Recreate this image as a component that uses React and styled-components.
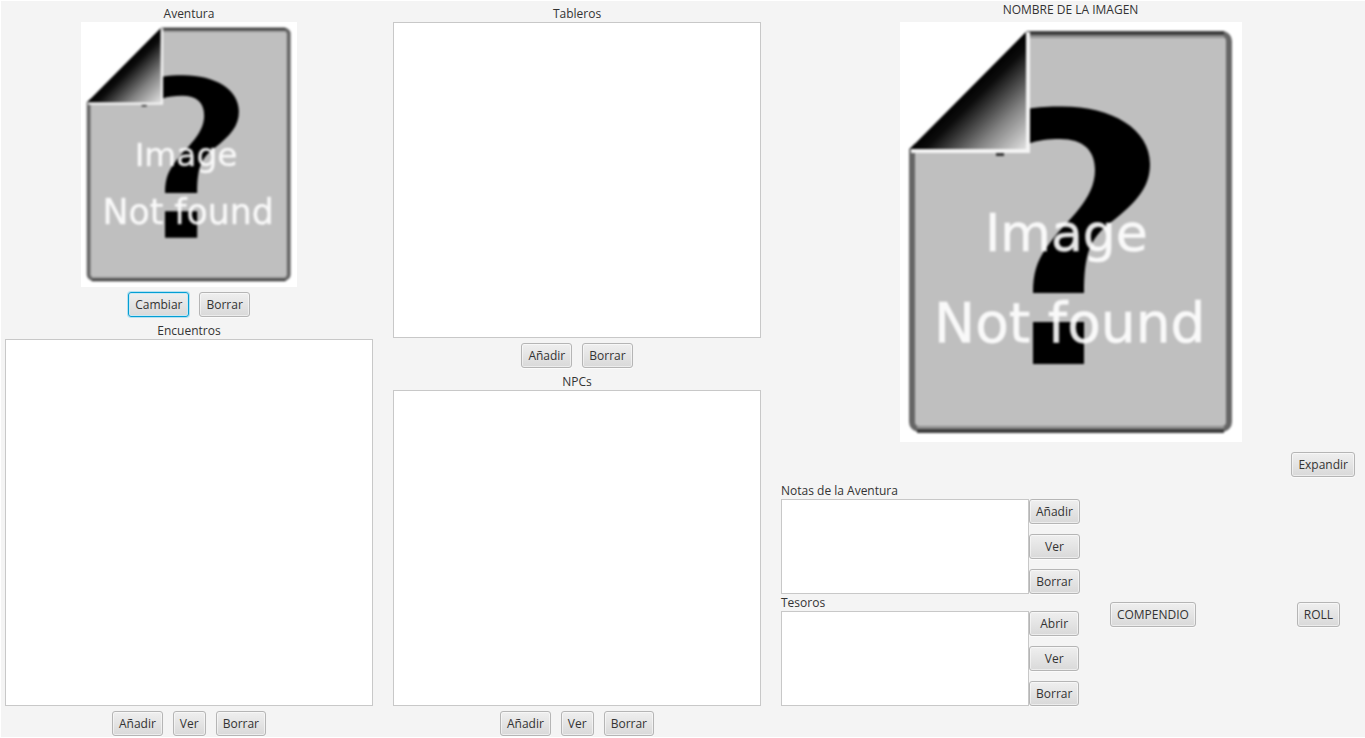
import React, { useId } from "react";
import styled, { createGlobalStyle, css } from "styled-components";

const GlobalStyle = createGlobalStyle`
  *, *::before, *::after { box-sizing: border-box; }
  body {
    margin: 0;
    background: #f4f4f4;
    color: #333;
    font: 12px/17px "Open Sans", "Noto Sans", sans-serif;
  }
`;

const Window = styled.main`
  display: grid;
  grid-template-columns: 368fr 368fr 579fr;
  column-gap: 20px;
  min-height: 100vh;
  padding: 0 5px 1px 4px;
  border: 1px solid #fff;
  border-right: 0;
`;

const Column = styled.div`
  display: flex;
  flex-direction: column;
  gap: 5px;
  padding-top: 4px;
`;

const Section = styled.section`
  display: flex;
  flex-direction: column;
  align-items: center;
  flex: ${(p) => (p.$grow ? "1 1 0" : "none")};
`;

const Title = styled.h2`
  margin: 0;
  font-size: 12px;
  line-height: 17px;
  font-weight: 400;
`;

const ListBox = styled.ul`
  flex: 1;
  align-self: stretch;
  margin: 0;
  padding: 0;
  list-style: none;
  background: #fff;
  border: 1px solid #c8c8c8;
`;

const ButtonRow = styled.div`
  display: flex;
  justify-content: center;
  gap: 10px;
  margin-top: 5px;
`;

const Button = styled.button`
  height: 25px;
  padding: 0 6px;
  border: 1px solid #b5b5b5;
  border-radius: 3px;
  background: linear-gradient(#efefef, #d9d9d9);
  box-shadow: inset 0 0 0 1px rgba(255, 255, 255, 0.5), 0 1px 0 #fbfbfb;
  color: #333;
  font: inherit;
  white-space: nowrap;
  ${(p) =>
    p.$active &&
    css`
      border-color: #039ed3;
      box-shadow: inset 0 0 0 1px #c9e8f4, 0 0 0 1px #b5e0f0;
    `}
`;

const Picture = styled.svg`
  display: block;
  width: ${(p) => (p.$large ? 342 : 216)}px;
  height: ${(p) => (p.$large ? 420 : 265)}px;
`;

const Viewer = styled.div`
  display: flex;
  flex-direction: column;
`;

const Preview = styled.section`
  display: flex;
  flex-direction: column;
  align-items: center;
  gap: 4px;
`;

const ExpandBar = styled.div`
  display: flex;
  justify-content: flex-end;
  padding: 10px 5px 5px;
`;

const Tools = styled.div`
  display: flex;
  flex: 1;
`;

const Notes = styled.div`
  display: flex;
  flex-direction: column;
`;

const NoteRow = styled.div`
  display: flex;
`;

const NoteList = styled(ListBox)`
  flex: none;
  width: 248px;
`;

const ButtonStack = styled.div`
  display: flex;
  flex-direction: column;
  gap: 10px;
`;

const Actions = styled.div`
  display: flex;
  flex: 1;
  justify-content: space-between;
  align-items: flex-start;
  padding: 120px 20px 0 30px;
`;

function MissingImage({ large }) {
  const id = useId();
  return (
    <Picture $large={large} viewBox="0 0 342 420" preserveAspectRatio="none" role="img" aria-label="Image Not found">
      <defs>
        <linearGradient id={`${id}fold`} gradientUnits="userSpaceOnUse" x1="68" y1="67" x2="126" y2="125">
          <stop offset="0" stopColor="#000" />
          <stop offset="0.15" stopColor="#0c0c0c" />
          <stop offset="0.6" stopColor="#858585" />
          <stop offset="1" stopColor="#dcdcdc" />
        </linearGradient>
        <filter id={`${id}soft`} x="0" y="0" width="1" height="1" colorInterpolationFilters="sRGB">
          <feGaussianBlur stdDeviation={large ? 1.2 : 1.4} />
        </filter>
      </defs>
      <rect width="342" height="420" fill="#fff" />
      <g filter={`url(#${id}soft)`}>
        <rect width="342" height="420" fill="#fff" />
        <rect x="12" y="12" width="317" height="395" rx="7" fill="#bfbfbf" stroke="#666" strokeWidth="6" />
        <path d="M17 11H324M17 409H324" stroke="#3c3c3c" strokeWidth="4" />
        <path d="M17 14.500H324M17 405.500H324" stroke="#909090" strokeWidth="3" />
        <path d="M127 87C139 85 149 84.500 162 84.500C212 84.500 250 107 250 142C250 165 237 180 210 201C191 216 184 229 184 271H133C133 245 140 234 152 218C167 198 195 178 195 148C195 128 183 117 160 117C148 117 139 118 127 122Z" />
        <path d="M133 300H184V342H133Z" />
        <path d="M96 132.500H104" stroke="#333" strokeWidth="3" />
        <path d="M0 0H127V9L9 127H0Z" fill="#fff" />
        <path d="M128 10V129H11" fill="none" stroke="#f4f4f4" strokeWidth="4" />
        <path d="M126 10V127H10Z" fill={`url(#${id}fold)`} />
        <g fill="#fff" fillOpacity="0.9" stroke="#fff" strokeOpacity="0.5" strokeWidth="1" fontFamily="DejaVu Sans">
          <text x="85" y="229" fontSize="52">Image</text>
          <text x="34" y="320" fontSize="55">Not found</text>
        </g>
      </g>
    </Picture>
  );
}

function ListSection({ title, buttons }) {
  return (
    <Section $grow>
      <Title>{title}</Title>
      <ListBox aria-label={title} />
      <ButtonRow>
        {buttons.map((b) => (
          <Button key={b} type="button">{b}</Button>
        ))}
      </ButtonRow>
    </Section>
  );
}

function NoteSection({ title, buttons }) {
  return (
    <section>
      <Title>{title}</Title>
      <NoteRow>
        <NoteList aria-label={title} />
        <ButtonStack>
          {buttons.map((b) => (
            <Button key={b} type="button">{b}</Button>
          ))}
        </ButtonStack>
      </NoteRow>
    </section>
  );
}

export default function App() {
  return (
    <>
      <GlobalStyle />
      <Window>
        <Column>
          <Section>
            <Title>Aventura</Title>
            <MissingImage />
            <ButtonRow>
              <Button type="button" $active>Cambiar</Button>
              <Button type="button">Borrar</Button>
            </ButtonRow>
          </Section>
          <ListSection title="Encuentros" buttons={["Añadir", "Ver", "Borrar"]} />
        </Column>
        <Column>
          <ListSection title="Tableros" buttons={["Añadir", "Borrar"]} />
          <ListSection title="NPCs" buttons={["Añadir", "Ver", "Borrar"]} />
        </Column>
        <Viewer>
          <Preview>
            <Title>NOMBRE DE LA IMAGEN</Title>
            <MissingImage large />
          </Preview>
          <ExpandBar>
            <Button type="button">Expandir</Button>
          </ExpandBar>
          <Tools>
            <Notes>
              <NoteSection title="Notas de la Aventura" buttons={["Añadir", "Ver", "Borrar"]} />
              <NoteSection title="Tesoros" buttons={["Abrir", "Ver", "Borrar"]} />
            </Notes>
            <Actions>
              <Button type="button">COMPENDIO</Button>
              <Button type="button">ROLL</Button>
            </Actions>
          </Tools>
        </Viewer>
      </Window>
    </>
  );
}
